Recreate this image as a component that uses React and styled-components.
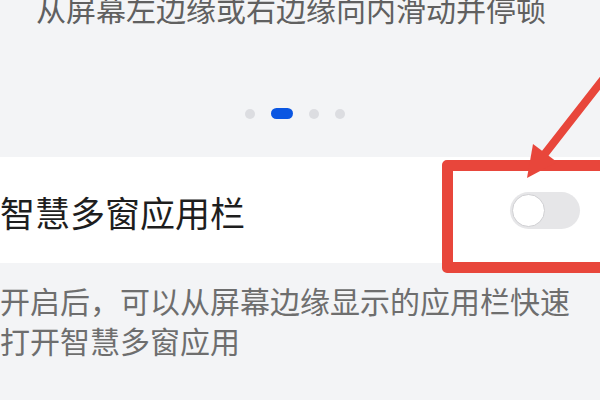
import React from "react";
import styled, { createGlobalStyle } from "styled-components";

const GlobalStyle = createGlobalStyle`
  html, body {
    margin: 0;
    padding: 0;
    background: #f3f4f6;
  }
  body {
    font-family: "Noto Sans CJK SC", "Noto Sans", sans-serif;
  }
`;

const Page = styled.div`
  position: relative;
  width: 600px;
  height: 400px;
  overflow: hidden;
  background: #f3f4f6;
  display: flex;
  flex-direction: column;
`;

const Hint = styled.div`
  margin-top: -12px;
  padding-left: 36px;
  font-size: 30px;
  line-height: 40px;
  color: #606060;
  white-space: nowrap;
`;

const Dots = styled.div`
  margin-top: 80px;
  height: 11px;
  display: flex;
  align-items: center;
  gap: 16px;
  padding-left: 245px;
`;

const Dot = styled.span`
  display: block;
  width: ${(p) => (p.$active ? 22 : 10)}px;
  height: ${(p) => (p.$active ? 11 : 10)}px;
  border-radius: 6px;
  background: ${(p) => (p.$active ? "#0a56e2" : "#dcdde1")};
`;

const Card = styled.div`
  margin-top: 38px;
  height: 106px;
  background: #ffffff;
  display: flex;
  align-items: center;
  justify-content: space-between;
  padding: 0 20px 0 0;
`;

const Title = styled.div`
  font-size: 35px;
  line-height: 40px;
  color: #1e1e1e;
  margin-top: 4px;
`;

const Toggle = styled.div`
  position: relative;
  width: 70px;
  height: 37px;
  border-radius: 19px;
  background: #e6e6e8;
  display: flex;
  align-items: center;
  padding-left: 2px;
  box-sizing: border-box;
`;

const Knob = styled.span`
  display: block;
  width: 33px;
  height: 33px;
  border-radius: 50%;
  background: #ffffff;
  border: 1.5px solid #cfcfd2;
  box-sizing: border-box;
`;

const Desc = styled.div`
  margin-top: 17px;
  width: 580px;
  font-size: 30px;
  line-height: 40px;
  color: #6e6e6e;
`;

const HighlightBox = styled.div`
  position: absolute;
  left: 442px;
  top: 160px;
  width: 220px;
  height: 113px;
  box-sizing: border-box;
  border: 11px solid #e8463b;
  border-radius: 5px;
`;

const ArrowSvg = styled.svg`
  position: absolute;
  left: 0;
  top: 0;
  pointer-events: none;
`;

export default function App() {
  return (
    <>
      <GlobalStyle />
      <Page>
        <Hint>从屏幕左边缘或右边缘向内滑动并停顿</Hint>
        <Dots>
          <Dot />
          <Dot $active />
          <Dot />
          <Dot />
        </Dots>
        <Card>
          <Title>智慧多窗应用栏</Title>
          <Toggle>
            <Knob />
          </Toggle>
        </Card>
        <Desc>开启后，可以从屏幕边缘显示的应用栏快速打开智慧多窗应用</Desc>
        <HighlightBox />
        <ArrowSvg width="600" height="400" viewBox="0 0 600 400">
          <line x1="640" y1="32" x2="540" y2="160" stroke="#e8463b" strokeWidth="8" strokeLinecap="round" />
          <polygon points="527,178 533,144 557,162" fill="#e8463b" />
        </ArrowSvg>
      </Page>
    </>
  );
}
